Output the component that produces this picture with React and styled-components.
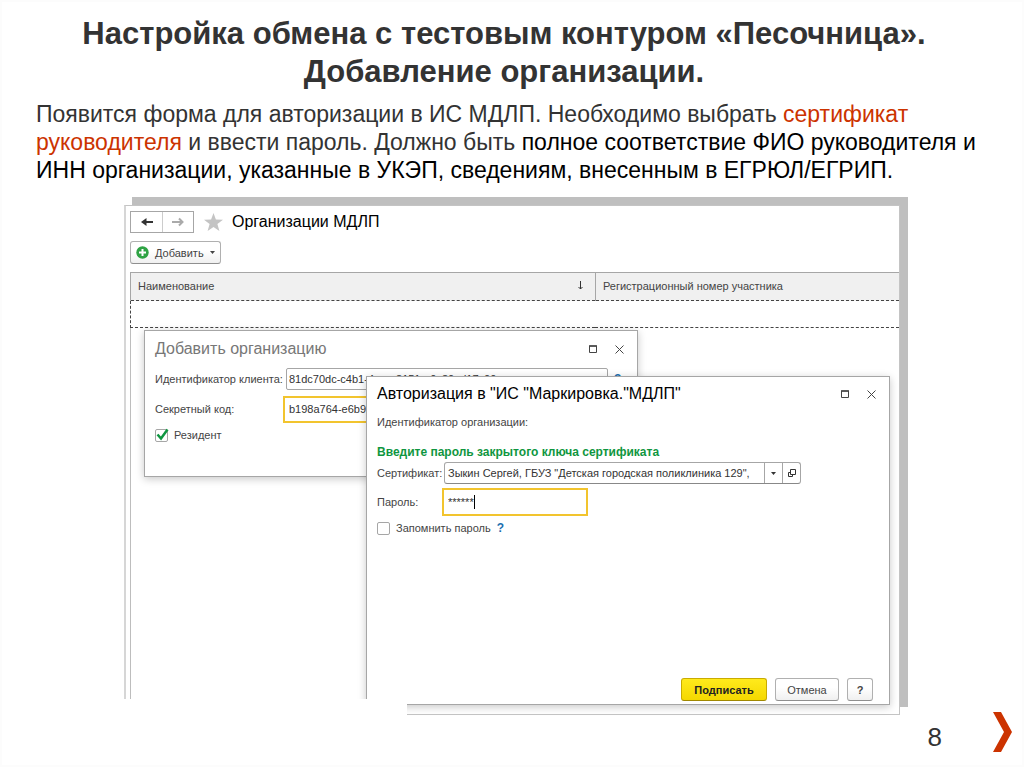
import React from 'react'
import styled, {createGlobalStyle} from 'styled-components'

const colors = {
    accent: '#cc3300',
    title: '#333333',
    text: '#444444',
    line: '#a6a6a6',
    yellow: '#f2c42e',
    green: '#0f9640',
    link: '#1c6fb0'
}

const GlobalStyle = createGlobalStyle`
    * {
        box-sizing: border-box;
    }
    body {
        margin: 0;
        background: #ffffff;
        font-family: "Liberation Sans", Arial, sans-serif;
    }
    button, input, select {
        font-family: inherit;
        margin: 0;
    }
`;

const Slide = styled.main`
    display: flex;
    flex-direction: column;
    min-height: 100vh;
    border: 2px solid #fcfcfc;
    padding: 13px 0 0;
`;

const Title = styled.h1`
    margin: 0 16px 0 0;
    font-size: 31px;
    line-height: 38px;
    text-align: center;
    color: ${colors.title};
`;

const Lead = styled.p`
    margin: 9px 34px 0;
    font-size: 23px;
    line-height: 28px;
    color: ${colors.title};
`;

const Accent = styled.span`
    color: ${colors.accent};
`;

const Strong = styled.span`
    color: #000000;
`;

const Frame = styled.section`
    position: relative;
    margin: 21px 122px 0;
    border: 1px solid #c4c4c4;
    border-left: 2px solid #d6d6d6;
    padding: 5px 0 0 4px;
    background: #ffffff;
    box-shadow: 8px -8px 0 #bfbfbf;
`;

const NavBar = styled.div`
    display: flex;
    align-items: center;
    height: 22px;
`;

const NavGroup = styled.div`
    display: flex;
    border: 1px solid ${colors.line};
`;

const NavButton = styled.button`
    display: flex;
    align-items: center;
    justify-content: center;
    width: 31px;
    height: 20px;
    border: 0;
    padding: 0;
    background: #ffffff;
    color: ${p => p.$muted ? '#aaaaaa' : '#333333'};

    & + & {
        border-left: 1px solid #cccccc;
    }
`;

const Star = styled.svg`
    margin: 0 9px 0 10px;
`;

const FrameTitle = styled.h2`
    margin: 0;
    font-size: 16px;
    line-height: 20px;
    font-weight: 400;
    color: #000000;
`;

const Button = styled.button`
    display: flex;
    align-items: center;
    justify-content: center;
    height: 23px;
    padding: 0 5px;
    border: 1px solid ${p => p.$primary ? '#c9ab00' : '#b0b0b0'};
    border-bottom-color: ${p => p.$primary ? '#a08800' : '#8f8f8f'};
    border-radius: 3px;
    background: ${p => p.$primary
        ? 'linear-gradient(#ffea1c, #f5d800)'
        : 'linear-gradient(#ffffff 40%, #f0f0f0)'};
    color: ${p => p.$primary ? '#222222' : colors.text};
    font-size: 11px;
    font-weight: ${p => p.$primary ? 700 : 400};
`;

const AddButton = styled(Button)`
    gap: 6px;
    margin: 8px 0 8px;
`;

const Table = styled.table`
    width: 100%;
    border-collapse: collapse;
    table-layout: fixed;
    font-size: 11px;
    color: ${colors.text};
`;

const HeadCell = styled.th`
    width: ${p => p.$width || 'auto'};
    height: 28px;
    padding: 0 7px 2px;
    border: 1px solid ${colors.line};
    border-right: 0;
    border-bottom: 0;
    background: #f0f0f0;
    font-weight: 400;
    text-align: left;
`;

const HeadInner = styled.div`
    display: flex;
    align-items: center;
    justify-content: space-between;
    padding-right: 4px;
`;

const EmptyRow = styled.td`
    height: 27px;
    border: 1px dashed #444444;
    border-right: 0;
`;

const Canvas = styled.div`
    min-height: 386px;
    border-left: 1px solid #bdbdbd;
`;

const Dialog = styled.section`
    position: absolute;
    border: 1px solid ${colors.line};
    background: #ffffff;
    box-shadow: 0 2px 8px rgba(0, 0, 0, 0.22);
    font-size: 11px;
    color: ${colors.text};
`;

const OrgDialog = styled(Dialog)`
    top: 124px;
    left: 18px;
    width: 494px;
    height: 147px;
    padding: 8px 4px 8px 10px;
`;

const AuthDialog = styled(Dialog)`
    display: flex;
    flex-direction: column;
    top: 170px;
    right: 9px;
    width: 524px;
    height: 329px;
    padding: 7px 4px 3px 10px;
`;

const DialogBar = styled.header`
    display: flex;
    align-items: center;
    height: 20px;
`;

const DialogTitle = styled.h3`
    flex: 1;
    margin: 0;
    font-size: 16px;
    line-height: 20px;
    font-weight: 400;
    color: ${p => p.$muted ? '#777777' : '#000000'};
`;

const IconButton = styled.button`
    display: flex;
    align-items: center;
    justify-content: center;
    width: 27px;
    height: 20px;
    padding: 0;
    border: 0;
    background: none;
    color: #444444;
`;

const Row = styled.div`
    display: flex;
    align-items: center;
    height: ${p => p.$height || '30px'};
`;

const Label = styled.label`
    flex: none;
    width: ${p => p.$width};
`;

const TextInput = styled.input`
    flex: none;
    width: ${p => p.$width};
    height: ${p => p.$active ? '27px' : '22px'};
    margin-left: ${p => p.$active ? '-3px' : '0'};
    padding: 0 ${p => p.$active ? '4px' : '2px'};
    border: ${p => p.$active ? `2px solid ${colors.yellow}` : `1px solid ${colors.line}`};
    border-radius: ${p => p.$active ? '0' : '2px'};
    background: #ffffff;
    font-size: 11px;
    color: #333333;
    outline: none;
`;

const Help = styled.a`
    margin-left: 6px;
    font-size: 12px;
    font-weight: 700;
    color: ${colors.link};
    text-decoration: none;
`;

const CheckLabel = styled.label`
    display: flex;
    align-items: center;
    gap: 6px;
`;

const Checkbox = styled.input`
    appearance: none;
    width: 13px;
    height: 13px;
    border: 1px solid ${colors.line};
    border-radius: 2px;
    background: #ffffff;
`;

const CheckBoxWrap = styled.span`
    position: relative;
    display: flex;

    svg {
        position: absolute;
        left: 1px;
        bottom: 1px;
        pointer-events: none;
    }
`;

const Hint = styled.p`
    margin: 4px 0 0;
    font-size: 12px;
    line-height: 16px;
    font-weight: 700;
    color: ${colors.green};
`;

const Combo = styled.div`
    display: flex;
    width: 357px;
    height: 22px;
    border: 1px solid ${colors.line};
    border-bottom-color: #888888;
    border-radius: 3px;
`;

const ComboSelect = styled.select`
    appearance: none;
    flex: 1;
    min-width: 0;
    padding: 0 3px;
    border: 0;
    background: none;
    font-size: 11px;
    color: #333333;
`;

const ComboButton = styled.button`
    display: flex;
    align-items: center;
    justify-content: center;
    width: 18px;
    padding: 0;
    border: 0;
    border-left: 1px solid ${colors.line};
    background: none;
    color: #333333;
`;

const PasswordField = styled.div`
    display: flex;
    align-items: center;
    width: 146px;
    height: 28px;
    margin-left: -2px;
    padding: 0 4px;
    border: 2px solid ${colors.yellow};
`;

const PasswordInput = styled.input`
    width: 26px;
    padding: 0;
    border: 0;
    font-size: 11px;
    color: #333333;
    outline: none;
`;

const Caret = styled.span`
    width: 1px;
    height: 14px;
    background: #000000;
`;

const Actions = styled.footer`
    display: flex;
    justify-content: flex-end;
    gap: 8px;
    margin-top: auto;
    padding-right: 12px;
`;

const ActionButton = styled(Button)`
    width: ${p => p.$width};
`;

// hides the lower left corner of the windows
const Cover = styled.div`
    position: absolute;
    left: -4px;
    bottom: -4px;
    width: 285px;
    height: 19px;
    background: #ffffff;
`;

const PageFooter = styled.footer`
    display: flex;
    justify-content: flex-end;
    align-items: center;
    gap: 51px;
    height: 44px;
    margin-top: -5px;
    padding-right: 9px;
    font-size: 26px;
    color: ${colors.title};
`;

const PageNumber = styled.span`
    padding-top: 10px;
`;

const Arrow = ({back}) => (
    <svg width="14" height="10" viewBox="0 0 14 10" fill="none" stroke="currentColor" strokeWidth="2">
        {back ? <path d="M13 5H3"/> : <path d="M1 5h10"/>}
        {back
            ? <path d="M6.500 1v8L1 5z" fill="currentColor" stroke="none"/>
            : <path d="M8 1.500L11.500 5 8 8.500"/>}
    </svg>
)

const Triangle = () => (
    <svg width="5" height="3" viewBox="0 0 5 3"><path d="M0 0h5L2.500 3z" fill="currentColor"/></svg>
)

const WindowButtons = () => (
    <>
        <IconButton aria-label="Развернуть">
            <svg width="8" height="8" viewBox="0 0 8 8" fill="none" stroke="currentColor">
                <path d="M.5 1h7v6.500h-7z"/>
                <path d="M0 1h8" strokeWidth="1.500"/>
            </svg>
        </IconButton>
        <IconButton aria-label="Закрыть">
            <svg width="9" height="9" viewBox="0 0 9 9" fill="none" stroke="currentColor">
                <path d="M.5.5l8 8M8.500.5l-8 8"/>
            </svg>
        </IconButton>
    </>
)

const AddOrganization = () => (
    <OrgDialog>
        <DialogBar>
            <DialogTitle $muted>Добавить организацию</DialogTitle>
            <WindowButtons/>
        </DialogBar>
        <Row $height="40px">
            <Label $width="131px" htmlFor="client">Идентификатор клиента:</Label>
            <TextInput id="client" $width="322px" defaultValue="81dc70dc-c4b1-4aaa-8151-a0c80ed17c00"/>
            <Help href="#client">?</Help>
        </Row>
        <Row $height="20px">
            <Label $width="131px" htmlFor="secret">Секретный код:</Label>
            <TextInput id="secret" $active $width="328px" defaultValue="b198a764-e6b9"/>
        </Row>
        <Row $height="32px">
            <CheckLabel>
                <CheckBoxWrap>
                    <Checkbox type="checkbox" defaultChecked/>
                    <svg width="13" height="13" viewBox="0 0 13 13" fill="none" stroke={colors.green} strokeWidth="2.500">
                        <path d="M1.500 6.500l3.500 4 6.500-9"/>
                    </svg>
                </CheckBoxWrap>
                Резидент
            </CheckLabel>
        </Row>
    </OrgDialog>
)

const Authorization = () => (
    <AuthDialog>
        <DialogBar>
            <DialogTitle>Авторизация в "ИС "Маркировка."МДЛП"</DialogTitle>
            <WindowButtons/>
        </DialogBar>
        <Row $height="36px">Идентификатор организации:</Row>
        <Hint>Введите пароль закрытого ключа сертификата</Hint>
        <Row $height="26px">
            <Label $width="67px" htmlFor="cert">Сертификат:</Label>
            <Combo>
                <ComboSelect id="cert">
                    <option>Зыкин Сергей, ГБУЗ "Детская городская поликлиника 129",</option>
                </ComboSelect>
                <ComboButton aria-label="Выбрать"><Triangle/></ComboButton>
                <ComboButton aria-label="Открыть">
                    <svg width="10" height="9" viewBox="0 0 10 9" fill="none" stroke="currentColor">
                        <path d="M3.500.5h5v5h-5zM3.500 3.500h-2v4h4v-2"/>
                    </svg>
                </ComboButton>
            </Combo>
        </Row>
        <Row $height="32px">
            <Label $width="67px" htmlFor="password">Пароль:</Label>
            <PasswordField>
                <PasswordInput id="password" defaultValue="******"/>
                <Caret/>
            </PasswordField>
        </Row>
        <Row $height="20px">
            <CheckLabel>
                <Checkbox type="checkbox"/>
                Запомнить пароль
            </CheckLabel>
            <Help href="#password">?</Help>
        </Row>
        <Actions>
            <ActionButton $primary $width="86px">Подписать</ActionButton>
            <ActionButton $width="64px">Отмена</ActionButton>
            <ActionButton $width="26px"><b>?</b></ActionButton>
        </Actions>
    </AuthDialog>
)

const App = () => {
    return (
        <>
            <GlobalStyle/>
            <Slide>
                <Title>Настройка обмена с тестовым контуром «Песочница».<br/>Добавление организации.</Title>
                <Lead>
                    Появится форма для авторизации в ИС МДЛП. Необходимо выбрать <Accent>сертификат</Accent>{' '}
                    <Accent>руководителя</Accent> и ввести пароль. Должно быть{' '}
                    <Strong>полное соответствие ФИО руководителя и</Strong>{' '}
                    <Strong>ИНН организации, указанные в УКЭП, сведениям, внесенным в ЕГРЮЛ/ЕГРИП.</Strong>
                </Lead>
                <Frame>
                    <NavBar>
                        <NavGroup>
                            <NavButton aria-label="Назад"><Arrow back/></NavButton>
                            <NavButton aria-label="Вперед" $muted><Arrow/></NavButton>
                        </NavGroup>
                        <Star width="19" height="18" viewBox="0 0 19 18">
                            <path
                                fill="#c4c4c4"
                                d="M9.500 0l2.400 6.500 7.100.2-5.600 4.300 2 7-5.900-4.100L3.600 18l2-7L0 6.700l7.100-.2z"/>
                        </Star>
                        <FrameTitle>Организации МДЛП</FrameTitle>
                    </NavBar>
                    <AddButton>
                        <svg width="13" height="13" viewBox="0 0 13 13">
                            <circle cx="6.500" cy="6.500" r="6.200" fill="#2fa344"/>
                            <path d="M6.500 3v7M3 6.500h7" stroke="#ffffff" strokeWidth="2"/>
                        </svg>
                        Добавить
                        <Triangle/>
                    </AddButton>
                    <Table>
                        <thead>
                            <tr>
                                <HeadCell $width="60.500%">
                                    <HeadInner>
                                        Наименование
                                        <svg width="7" height="9" viewBox="0 0 7 9" fill="none" stroke="#333333">
                                            <path d="M3.500 0v8M1.500 6l2 2 2-2"/>
                                        </svg>
                                    </HeadInner>
                                </HeadCell>
                                <HeadCell>Регистрационный номер участника</HeadCell>
                            </tr>
                        </thead>
                        <tbody>
                            <tr>
                                <EmptyRow colSpan="2"/>
                            </tr>
                        </tbody>
                    </Table>
                    <Canvas/>
                    <AddOrganization/>
                    <Authorization/>
                    <Cover/>
                </Frame>
                <PageFooter>
                    <PageNumber>8</PageNumber>
                    <svg width="20" height="40" viewBox="0 0 20 40">
                        <path d="M0 0h8l11 20L8 40H0l11-20z" fill={colors.accent}/>
                    </svg>
                </PageFooter>
            </Slide>
        </>
    )
}

export default App
